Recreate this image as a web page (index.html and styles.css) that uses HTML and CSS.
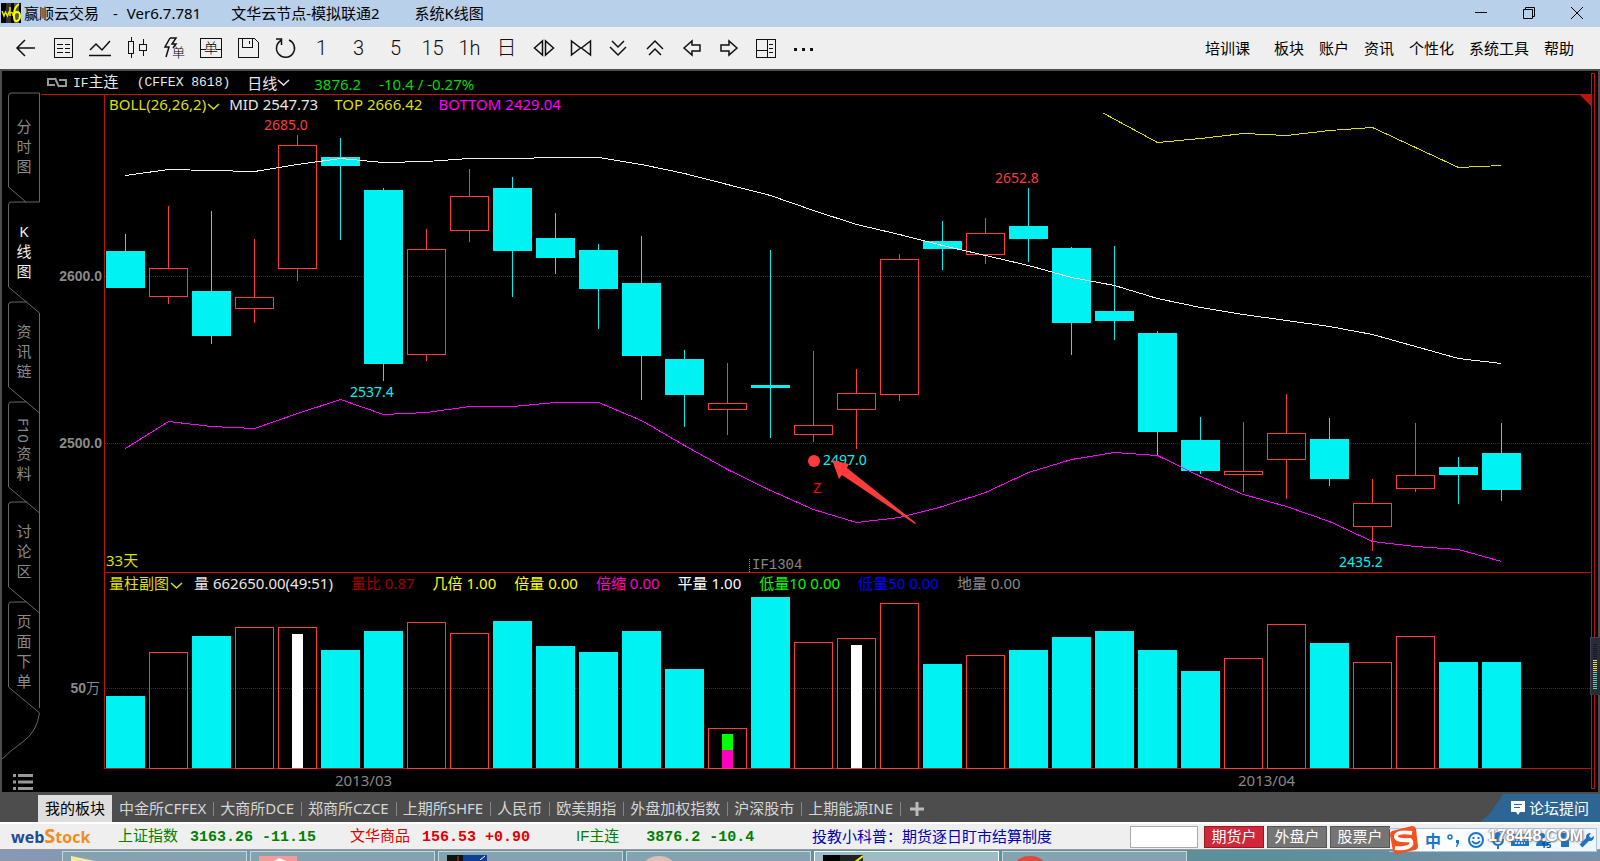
FILE: index.html
```html
<!DOCTYPE html>
<html lang="zh-CN">
<head>
<meta charset="utf-8">
<title>赢顺云交易 - 系统K线图</title>
<link rel="stylesheet" href="styles.css">
</head>
<body>
<header class="titlebar">
  <svg class="app-icon" width="20" height="20" viewBox="0 0 20 20" aria-hidden="true">
    <rect width="20" height="20" fill="#000"/>
    <rect x="5" width="5" height="20" fill="#333"/><rect x="13" width="5" height="20" fill="#555"/>
    <path d="M1 8l2 5 1.500-4 2 4 2-5M9 4v9M9 10q3-2 3 3" fill="none" stroke="#e6e600" stroke-width="1.500"/>
    <path d="M18 1q-5 3-5 11M13 13q0-4 3-4t3 4-3 5-3-5" fill="none" stroke="#ff0" stroke-width="2"/>
  </svg>
  <span class="t-name">赢顺云交易</span><span class="t-dash">-</span><span class="t-ver">Ver6.7.781</span>
  <span class="t-node">文华云节点-模拟联通2</span><span>系统K线图</span>
  <div class="win-buttons">
    <button aria-label="最小化"><svg width="14" height="14" viewBox="0 0 14 14"><path d="M1 6.500h12"/></svg></button>
    <button aria-label="还原"><svg width="14" height="14" viewBox="0 0 14 14"><path d="M1.500 3.500h9v9h-9zM3.500 3v-1.500h9v9H11"/></svg></button>
    <button aria-label="关闭"><svg width="14" height="14" viewBox="0 0 14 14"><path d="M1 1l12 12M13 1L1 13"/></svg></button>
  </div>
</header>

<div class="toolbar">
  <div class="tools">
    <button aria-label="返回"><svg viewBox="0 0 24 24"><path d="M21 12H4M11 4l-8 8 8 8"/></svg></button>
    <button aria-label="报价"><svg viewBox="0 0 24 24"><path class="px" d="M3.500 2.500h18v19h-18zM6 8.500h6M14 8.500h5M6 12.500h6M14 12.500h5M6 16.500h6M14 16.500h5"/></svg></button>
    <button aria-label="分时"><svg viewBox="0 0 24 24"><path d="M2 14l6-6 6 6 8-9M1 19.500h22"/></svg></button>
    <button aria-label="K线"><svg viewBox="0 0 24 24"><path class="px" d="M3.500 5.500h5v12h-5zM6 1v4M6 18v4M14.500 8.500h7v6h-7zM18 3v5M18 15v5"/></svg></button>
    <button aria-label="闪电下单"><svg viewBox="0 0 24 24"><path d="M8 2L3 11h4L4 21M8 2h6l-4 6h4l-3 4"/><text x="10" y="21" font-size="13">单</text></svg></button>
    <button aria-label="下单"><svg viewBox="0 0 24 24"><path class="px" d="M1.500 2.500h21v19h-21zM2 13.500h5M17 13.500h5"/><text x="5" y="17" font-size="14">单</text></svg></button>
    <button aria-label="保存"><svg viewBox="0 0 24 24"><path class="px" d="M2.500 2.500h16l4 4v15h-20zM6.500 3v8h10V3M13.500 5v3"/></svg></button>
    <button aria-label="刷新"><svg viewBox="0 0 24 24"><path d="M8 4.500a9 9 0 1 0 8-.5M3 3h5.500v6"/></svg></button>
    <button>1</button><button>3</button><button>5</button><button>15</button><button>1h</button><button>日</button>
    <button aria-label="拉宽"><svg viewBox="0 0 24 24"><path d="M10.500 5v14L2.500 12zM13.500 5v14l8-7z"/></svg></button>
    <button aria-label="压缩"><svg viewBox="0 0 24 24"><path d="M2.500 5v14l9-7zM21.500 5v14l-9-7z"/></svg></button>
    <button aria-label="向下"><svg viewBox="0 0 24 24"><path d="M6 5l6 6 6-6M4 11l8 8 8-8"/></svg></button>
    <button aria-label="向上"><svg viewBox="0 0 24 24"><path d="M4 13l8-8 8 8M6 19l6-6 6 6"/></svg></button>
    <button aria-label="左移"><svg viewBox="0 0 24 24"><path d="M4 12l8-7v4h8v6h-8v4z"/></svg></button>
    <button aria-label="右移"><svg viewBox="0 0 24 24"><path d="M20 12l-8-7v4H4v6h8v4z"/></svg></button>
    <button aria-label="布局"><svg viewBox="0 0 24 24"><path class="px" d="M2.500 3.500h19v18h-19zM13.500 4v17M3 14.500h10M15 8.500h4M15 12.500h4M15 16.500h4"/></svg></button>
    <button aria-label="更多"><svg viewBox="0 0 24 24"><path class="dots" d="M3 12h3v3H3zM11 12h3v3h-3zM19 12h3v3h-3z"/></svg></button>
  </div>
  <nav class="menu">
    <a href="#" class="course">培训课</a><a href="#">板块</a><a href="#">账户</a><a href="#">资讯</a><a href="#">个性化</a><a href="#">系统工具</a><a href="#">帮助</a>
  </nav>
</div>

<main class="workspace">
  <nav class="side">
    <svg class="side-lines" width="40" height="692" viewBox="0 0 40 692" aria-hidden="true">
      <path d="M24 131L6.500 116V25q0-3 3-3H37.500V131H9.500q-3 0-3 3V216l31 26V637"/>
      <path d="M25 231H9.500q-3 0-3 3V316l31 26M25 331H9.500q-3 0-3 3V416l31 26M25 431H9.500q-3 0-3 3V516l31 26M25 531H9.500q-3 0-3 3V616l31 26Q35 660 22 670Q8 680 0 688"/>
    </svg>
    <button><span>分</span><span>时</span><span>图</span></button>
    <button class="on"><span>K</span><span>线</span><span>图</span></button>
    <button><span>资</span><span>讯</span><span>链</span></button>
    <button><span class="turned">F10</span><span>资</span><span>料</span></button>
    <button><span>讨</span><span>论</span><span>区</span></button>
    <button><span>页</span><span>面</span><span>下</span><span>单</span></button>
    <button class="list" aria-label="列表"><svg width="20" height="18" viewBox="0 0 20 18"><path d="M0 2.500h3M5 2.500h15M0 9h3M5 9h15M0 15.500h3M5 15.500h15"/></svg></button>
  </nav>

  <section class="chart">
    <div class="contract">
      <svg width="20" height="12" viewBox="0 0 20 12" aria-hidden="true"><path d="M8 2H1v6h7M8 1l4 9M12 3h7v6h-7" fill="none" stroke="#999" stroke-width="2"/></svg>
      <span class="c-name"><b>IF</b>主连</span>
      <span class="c-code">(CFFEX 8618)</span>
      <button class="c-period">日线<svg width="13" height="8" viewBox="0 0 13 8"><path d="M1 1l5.500 5L12 1"/></svg></button>
      <span class="c-price">3876.2</span><span class="c-change">-10.4 / -0.27%</span>
    </div>
    <div class="plots">
      <div class="axis"><span class="a2600">2600.0</span><span class="a2500">2500.0</span><span class="a50"><b>50</b>万</span></div>
      <div class="panels">
        <div class="panel price">
          <div class="legend">
            <button class="yellow">BOLL(26,26,2)<svg width="13" height="8" viewBox="0 0 13 8"><path d="M1 1l5.500 5L12 1"/></svg></button>
            <span class="silver">MID 2547.73</span><span class="yellow">TOP 2666.42</span><span class="magenta">BOTTOM 2429.04</span>
          </div>
          <svg class="plot" id="price" width="100%" height="459"></svg>
          <svg class="corner" width="11" height="11" viewBox="0 0 11 11" aria-hidden="true"><path d="M0 0h11v11z" fill="#c0140a"/></svg>
        </div>
        <div class="panel volume">
          <div class="legend">
            <button class="yellow">量柱副图<svg width="13" height="8" viewBox="0 0 13 8"><path d="M1 1l5.500 5L12 1"/></svg></button>
            <span class="silver">量 662650.00(49:51)</span><span class="dark">量比 0.87</span><span class="bright">几倍 1.00</span><span class="bright">倍量 0.00</span><span class="pink">倍缩 0.00</span><span class="white">平量 1.00</span><span class="green">低量10 0.00</span><span class="blue">低量50 0.00</span><span class="grey">地量 0.00</span>
          </div>
          <svg class="plot" id="volume" width="100%" height="173"></svg>
        </div>
        <svg class="dates" width="100%" height="23"><text x="231" y="17">2013/03</text><text x="1134" y="17">2013/04</text></svg>
      </div>
    </div>
  </section>
  <div class="scroll"></div>
  <svg class="gauge" width="10" height="58" viewBox="0 0 10 58" aria-hidden="true">
    <rect width="14" height="58" rx="2" fill="#2b2b38" stroke="#454550"/>
    <path d="M5 7v16" stroke="#121a22" stroke-width="4" stroke-dasharray="1 1"/>
    <path d="M5 23v12" stroke="#e6dc50" stroke-width="4" stroke-dasharray="1 1"/>
    <path d="M5 35v17" stroke="#5cd0a8" stroke-width="4" stroke-dasharray="1 1"/>
  </svg>
</main>

<nav class="boards">
  <button class="on">我的板块</button><button>中金所CFFEX</button><button>大商所DCE</button><button>郑商所CZCE</button><button>上期所SHFE</button><button>人民币</button><button>欧美期指</button><button>外盘加权指数</button><button>沪深股市</button><button>上期能源INE</button>
  <button class="add" aria-label="添加"><svg width="14" height="14" viewBox="0 0 14 14"><path d="M7 0v14M0 7h14"/></svg></button>
  <a href="#" class="forum"><svg width="14" height="15" viewBox="0 0 14 15"><path d="M0 0h14v11h-5l-2 3-2-3H0z" fill="#fff"/><path d="M3 3.500h8M3 6.500h6" stroke="#2d6595" stroke-width="1"/></svg>论坛提问</a>
</nav>

<footer class="ticker">
  <span class="logo"><i>web</i><em>S</em>tock</span>
  <span class="quote down q1">上证指数<b>3163.26 -11.15</b></span>
  <span class="quote up q2">文华商品<b>156.53 +0.90</b></span>
  <span class="quote down q3">IF主连<b>3876.2 -10.4</b></span>
  <a class="news" href="#">投教小科普：期货逐日盯市结算制度</a>
  <div class="accounts">
    <input type="text" aria-label="代码">
    <button class="red">期货户</button><button>外盘户</button><button>股票户</button>
  </div>
</footer>

<div class="taskbar" aria-hidden="true">
  <span class="task"><svg width="26" height="7"><path d="M0 7V1l24 5v1z" fill="#f3e9a0"/></svg></span>
  <span class="task"><svg width="40" height="7"><rect width="38" height="7" y="1" fill="#f29c9c"/><path d="M20 3l10 4H14z" fill="#fff"/></svg></span>
  <span class="task"><svg width="40" height="7"><rect width="18" height="7" fill="#111"/><path d="M16 0h24v7H16z" fill="#0d3f95"/><path d="M33 5l5-4" stroke="#fff"/><path d="M11 1v6" stroke="#d33"/></svg></span>
  <span class="task"><svg width="40" height="7"><ellipse cx="24" cy="9" rx="14" ry="8" fill="#dcc0b4"/></svg></span>
  <span class="task active"><svg width="40" height="7"><rect width="40" height="7" fill="#222"/><rect width="17" height="7" fill="#000"/><path d="M32 7l8-6" stroke="#ee0" stroke-width="2"/></svg></span>
  <span class="task"><svg width="40" height="7"><ellipse cx="19" cy="9" rx="14" ry="8" fill="#e04a3a"/></svg></span>
</div>

<div class="ime">
  <svg class="sogou" width="30" height="28" viewBox="0 0 30 28"><path d="M3 5L23 0q3 0 4 3l2 17q0 3-3 4L8 28q-3 0-4-3L1 9q0-3 2-4z" fill="#f4511e"/><path d="M23 7Q8 5 7 10t14 4q4 4-2 7-6 2-13 1" fill="none" stroke="#fff" stroke-width="4"/></svg>
  <span class="zh">中</span>
  <svg width="14" height="18" viewBox="0 0 14 18"><circle cx="3" cy="6" r="2" fill="none" stroke="#1c74c8" stroke-width="1.500"/><path d="M9 9h3v3l-2 4H9l1-4H9z" fill="#1c74c8"/></svg>
  <svg width="18" height="18" viewBox="0 0 18 18" fill="none" stroke="#1c74c8" stroke-width="2"><circle cx="9" cy="9" r="7"/><path d="M5 10q4 5 8 0M6.500 6v2M11.500 6v2"/></svg>
  <svg width="14" height="18" viewBox="0 0 14 18"><rect x="4" y="1" width="6" height="10" rx="3" fill="#1c74c8"/><path d="M2 8q0 6 5 6t5-6M7 14v4" fill="none" stroke="#1c74c8" stroke-width="2"/></svg>
  <svg width="18" height="14" viewBox="0 0 18 14"><rect y="1" width="18" height="12" fill="#1c74c8"/><path d="M2 4h14M2 7h14M4 10h10" stroke="#fff" stroke-width="1.500" stroke-dasharray="2 1"/></svg>
  <svg width="16" height="16" viewBox="0 0 16 16"><circle cx="7" cy="4" r="3" fill="#1c74c8"/><path d="M1 14q0-6 6-6t6 6z" fill="#1c74c8"/><text x="6" y="16" font-size="9" font-weight="700" fill="#124a80">15</text></svg>
  <svg width="16" height="14" viewBox="0 0 16 14"><path d="M0 3l5-3h6l5 3-2 4-2-1v8H4V6L2 7z" fill="#1c74c8"/></svg>
  <svg width="16" height="16" viewBox="0 0 16 16"><path d="M2 14L9 7" stroke="#1c74c8" stroke-width="4"/><path d="M15 4l-3 2-2-2 2-3q-5 0-5 4t4 4 4-5z" fill="#1c74c8"/></svg>
  <span class="watermark">178448.COM</span>
</div>
<script src="chart.js"></script>
</body>
</html>
```
FILE: styles.css
```css
* { box-sizing: border-box; }
body {
  margin: 0;
  position: relative;
  min-height: 100vh;
  overflow-x: hidden;
  background: #4d4d4d;
  color: #000;
  font-family: "Noto Sans", "Noto Sans CJK SC", sans-serif;
  font-size: 15px;
  line-height: 20px;
  display: flex;
  flex-direction: column;
}
button, input { font: inherit; color: inherit; }
button { margin: 0; padding: 0; border: 0; background: none; white-space: nowrap; }
a { color: inherit; text-decoration: none; white-space: nowrap; }
svg { display: block; flex: none; }
span { white-space: nowrap; }

.titlebar {
  display: flex;
  align-items: center;
  height: 27px;
  padding: 0 8px 2px 1px;
  background: #b9d0ea;
}
.app-icon { margin-right: 3px; }
.t-name { margin-right: 14px; }
.t-dash { margin-right: 9px; }
.t-ver { margin-right: 30px; }
.t-node { margin-right: 35px; }
.win-buttons { display: flex; margin-left: auto; }
.win-buttons button { width: 48px; display: flex; justify-content: center; }
.win-buttons button:last-child { width: 30px; margin-left: 9px; }
.win-buttons path { fill: none; stroke: #000; }

.toolbar {
  display: flex;
  align-items: center;
  justify-content: space-between;
  height: 42px;
  padding: 0 26px 0 7px;
  background: #efefef;
}
.tools { display: flex; }
.tools button {
  width: 37px;
  height: 32px;
  display: flex;
  align-items: center;
  justify-content: center;
  font-family: Roboto, "Noto Sans CJK SC", sans-serif;
  font-size: 20px;
  font-weight: 300;
  color: #111;
}
.tools svg { width: 24px; height: 24px; }
.tools path { fill: none; stroke: #111; stroke-width: 1.5; }
.tools .px { shape-rendering: crispEdges; stroke-width: 1; }
.tools .dots { fill: #111; stroke: none; }
.menu { display: flex; gap: 15px; }
.course { margin-right: 9px; }

.workspace {
  position: relative;
  display: flex;
  flex: 1 0 auto;
  background: #000;
  border: solid #4d4d4d;
  border-width: 2px 2px 0;
}
.side { position: relative; width: 39px; padding-top: 22px; display: flex; flex-direction: column; }
.side-lines { position: absolute; left: 0; top: 0; }
.side-lines path { fill: none; stroke: #666; }
.side button {
  position: relative;
  width: 44px;
  height: 100px;
  padding-bottom: 3px;
  display: flex;
  flex-direction: column;
  align-items: center;
  justify-content: center;
  color: #8a8a8a;
}
.side button:nth-of-type(1) { height: 109px; }
.side .on { color: #eee; }
.turned { writing-mode: vertical-rl; }
.side .list { width: 42px; height: 18px; margin-top: 71px; padding: 0; }
.list path { stroke: #999; stroke-width: 3; }

.chart { flex: 1; min-width: 0; }
.contract {
  display: flex;
  align-items: center;
  height: 24px;
  padding-left: 6px;
  border-bottom: 1px solid #c0140a;
  color: #e8e8e8;
}
.c-name { margin: 0 18px 0 6px; }
.c-name b { font-family: "Liberation Mono", monospace; font-size: 13px; font-weight: 400; }
.c-code { margin-right: 17px; font-family: "Liberation Mono", monospace; font-size: 13px; }
.c-period { display: flex; align-items: center; margin-right: 24px; }
.c-price { margin-right: 18px; }
.c-price, .c-change { padding-top: 3px; color: #00dc00; }
.c-period path, .legend path { fill: none; stroke: currentColor; stroke-width: 1.5; }

.plots { display: flex; }
.axis {
  width: 63px;
  display: flex;
  flex-direction: column;
  align-items: flex-end;
  padding-right: 2px;
  font: bold 14px/20px "Liberation Sans", "Noto Sans CJK SC", sans-serif;
  color: #8a8a8a;
}
.a2600 { margin-top: 171px; }
.a2500 { margin-top: 147px; }
.a50 { margin: 225px 2px 0 0; font-weight: 400; }
.panels { flex: 1; min-width: 0; }
.panel { position: relative; border-left: 1px solid #c0140a; border-bottom: 1px solid #c0140a; }
.legend { display: flex; align-items: center; padding-left: 4px; }
.price .legend { height: 18px; gap: 16px; }
.volume .legend { height: 22px; padding-bottom: 2px; gap: 18px; }
.legend button { display: flex; align-items: center; margin-right: -7px; }
.legend button svg { margin: 6px 0 0 1px; }
.corner { position: absolute; right: 0; top: 0; }
.plot { overflow: visible; shape-rendering: crispEdges; }
.plot text { font-size: 14px; }
.plot .days { font-size: 15px; }
.dates { fill: #888; font-size: 15px; }
.yellow { color: #dfdf00; }
.bright { color: #ff0; }
.silver { color: #e8e8e8; }
.white { color: #fff; }
.magenta { color: #f0f; }
.pink { color: #ff00c0; }
.dark { color: #a00000; }
.green { color: #0f0; }
.blue { color: #00f; }
.grey { color: #888; }

.grid { stroke: #a00000; stroke-dasharray: 1 1; }
.up-shape { stroke: #ff3b3b; fill: none; }
.down-shape { stroke: none; fill: #00f2f2; }
.down-wick { stroke: #00f2f2; }
.mid { stroke: #f2f2f2; fill: none; }
.top { stroke: #dfdf00; fill: none; }
.bottom { stroke: #f0f; fill: none; }
.round { shape-rendering: auto; }

.scroll { width: 4px; margin: 2px 3px 3px 0; border: 1px solid #c0140a; }
.gauge { position: absolute; right: -2px; top: 566px; shape-rendering: crispEdges; }

.boards {
  display: flex;
  height: 30px;
  padding: 3px 0 0 38px;
  color: #d5d5d5;
  background: #4d4d4d;
}
.boards button { position: relative; padding: 0 7px 2px; }
.boards button + button::before {
  content: "";
  position: absolute;
  left: 0;
  top: 7px;
  height: 14px;
  border-left: 1px solid #858585;
}
.boards .on { color: #000; background: #dedede; }
.boards .on + button::before { border: 0; }
.boards .add { padding: 0 10px; }
.add path { stroke: #bbb; stroke-width: 3; }
.forum {
  display: flex;
  align-items: center;
  gap: 4px;
  margin-left: auto;
  margin-top: -1px;
  padding: 0 11px 0 30px;
  color: #fff;
  background: #2d6595;
  clip-path: polygon(22px 0, 100% 0, 100% 100%, 0 100%, 10px 65%);
}

.ticker {
  display: flex;
  align-items: center;
  height: 28px;
  padding-left: 11px;
  border-top: 2px solid #fff;
  border-bottom: 1px solid #999;
  background: #efefef;
  font-family: "Liberation Sans", "Noto Sans CJK SC", sans-serif;
}
.logo { width: 107px; font: bold 16px/20px "Open Sans", sans-serif; color: #f68a1f; }
.logo i { font-style: normal; color: #1b4c94; }
.logo em { font-style: normal; font-size: 20px; }
.quote b { margin-left: 12px; font: bold 15px/20px "Liberation Mono", monospace; }
.down { color: #008000; }
.up { color: #e00000; }
.q1 { width: 232px; }
.q2 { width: 226px; }
.q3 { width: 236px; }
.q3 b { margin-left: 27px; }
.news { color: #0000b8; }
.accounts { display: flex; gap: 3px; margin: 0 210px 0 auto; }
.accounts input { width: 68px; height: 22px; margin-right: 3px; padding: 0 3px; border: 1px solid #aaa; background: #fff; }
.accounts button { width: 60px; height: 22px; border: 1px solid #555; background: #757575; color: #fff; line-height: 18px; }
.accounts .red { border-color: #8f1b24; background: #d0283a; }

.taskbar {
  display: flex;
  gap: 3px;
  height: 11px;
  padding: 1px 0 0 62px;
  overflow: hidden;
  background: linear-gradient(90deg, #8799b5, #5f929c 40%, #5d8f99 80%, #7590aa);
}
.task { width: 185px; height: 14px; padding: 3px 0 0 8px; border: 1px solid #c5d8df; background: #84a2b0; }
.task.active { background: #9fbcc4; border-color: #fff; }

.ime {
  position: absolute;
  right: 3px;
  bottom: 9px;
  height: 24px;
  width: 208px;
  display: flex;
  align-items: center;
  gap: 6px;
  border: 1px solid #a8c4e0;
  border-left: 0;
  background: linear-gradient(90deg, transparent 20px, #fff 20px, #eef6ff);
}
.zh { font: bold 16px/20px "Noto Sans CJK SC", sans-serif; color: #1c74c8; }
.watermark {
  position: absolute;
  left: 99px;
  top: -4px;
  font: bold 20px/22px "Liberation Sans Narrow", "Liberation Sans", sans-serif;
  font-size: 16px;
  color: #fff;
  text-shadow: 1px 1px 2px #666, -1px 0 1px #999;
}
```
FILE: chart.js
```js
// Each bar: high, body top, body bottom, low, rising flag (panel y coordinates), volume top
const bars = [
  [234,251,288,288,0,696],[206,268,297,304,1,652],[211,291,336,344,0,636],[239,297,309,323,1,627],
  [135,145,269,281,1,627],[138,157,166,240,0,650],[188,190,364,381,0,631],[229,249,355,361,1,622],
  [169,196,231,242,1,633],[177,188,251,297,0,621],[213,238,258,274,0,646],[244,250,289,329,0,652],
  [236,283,356,400,0,631],[350,359,395,427,0,669],[363,403,410,435,1,728],[250,385,388,438,0,597],
  [351,425,435,442,1,642],[369,393,410,449,1,638],[254,259,395,401,1,603],[221,241,249,270,0,664],
  [218,233,255,264,1,655],[188,226,239,262,0,650],[247,248,323,355,0,637],[246,311,321,340,0,631],
  [331,333,432,455,0,650],[417,440,471,474,0,671],[422,471,475,492,1,658],[394,433,460,499,1,624],
  [418,439,479,486,0,643],[479,503,527,551,1,662],[423,475,489,492,1,636],[457,467,475,504,0,662],
  [423,453,490,501,0,662]
];
const mid = [175,169,170,171,164,158,162,161,158,158,157,157,164,173,184,195,210,224,234,245,255,265,277,285,298,307,314,320,326,334,346,358,363];
const low = [448,421,426,428,413,399,414,412,406,406,402,402,420,445,469,490,509,522,517,506,492,472,459,452,455,476,494,506,521,541,546,549,561];
const high = [142,138,133,135,130,127,147,167,165];

const STEP = 43, WIDTH = 39, PRICE_TOP = 113, VOLUME_TOP = 595, VOLUME_BASE = 768;
const left = i => 1 + i * STEP;
const centre = i => left(i) + 19.5;
const line = (cls, x1, y1, x2, y2) => `<line class="${cls}" x1="${x1}" y1="${y1}" x2="${x2}" y2="${y2}"/>`;
const box = (cls, x, y, w, h) => `<rect class="${cls}" x="${x}" y="${y}" width="${w}" height="${h}"/>`;
const curve = (cls, ys, first, lead) =>
  `<polyline class="${cls}" points="${lead || ''} ${ys.map((y, k) => `${centre(first + k)},${y - PRICE_TOP + 0.5}`).join(' ')}"/>`;
const label = (x, y, colour, text) => `<text x="${x}" y="${y}" fill="${colour}">${text}</text>`;

let price = line('grid', 0, 163.5, '100%', 163.5) + line('grid', 0, 330.5, '100%', 330.5);
let volume = line('grid', 0, 93.5, '100%', 93.5);
bars.forEach(([hi, top, bottom, lo, rising, vol], i) => {
  const p = y => y - PRICE_TOP;
  const wick = rising ? 'up-shape' : 'down-wick';
  price += line(wick, centre(i), p(hi), centre(i), p(top)) + line(wick, centre(i), p(bottom), centre(i), p(lo));
  price += rising
    ? box('up-shape', left(i) + 0.5, p(top) + 0.5, WIDTH - 1, bottom - top - 1)
    : box('down-shape', left(i), p(top), WIDTH, bottom - top);
  const y = vol - VOLUME_TOP;
  volume += rising
    ? box('up-shape', left(i) + 0.5, y + 0.5, WIDTH - 1, VOLUME_BASE - vol)
    : box('down-shape', left(i), y, WIDTH, VOLUME_BASE - vol);
});
const marker = (i, from, to, colour) => `<rect x="${left(i) + 14}" y="${from - VOLUME_TOP}" width="11" height="${to - from}" fill="${colour}"/>`;
volume += marker(4, 634, 768, '#fff') + marker(17, 645, 768, '#fff') + marker(14, 734, 750, '#0f0') + marker(14, 750, 768, '#ff00c0');

price += curve('mid', mid, 0) + curve('bottom', low, 0) + curve('top', high, 24, '998,0');
price += label(159, 17, '#ff3b3b', '2685.0') + label(245, 284, '#00f2f2', '2537.4')
  + label(890, 70, '#ff3b3b', '2652.8') + label(718, 352, '#00f2f2', '2497.0')
  + label(1234, 454, '#00f2f2', '2435.2')
  + '<text class="days" x="1" y="453" fill="#dfdf00">33天</text>'
  + '<text x="708" y="380" fill="#f00" font-family="Liberation Mono">Z</text>'
  + '<text x="647" y="456" fill="#888" font-family="Liberation Mono">IF1304</text>'
  + '<line x1="644.5" y1="446" x2="644.5" y2="459" stroke="#888" stroke-dasharray="1 1"/>'
  + '<circle class="round" cx="709" cy="348" r="6" fill="#ff3b3b"/>'
  + '<path class="round" d="M727 347l17 4-2 4 69 55-1 1-73-49-3 4z" fill="#ff3b3b"/>';
document.getElementById('price').innerHTML = price;
document.getElementById('volume').innerHTML = volume;
```
